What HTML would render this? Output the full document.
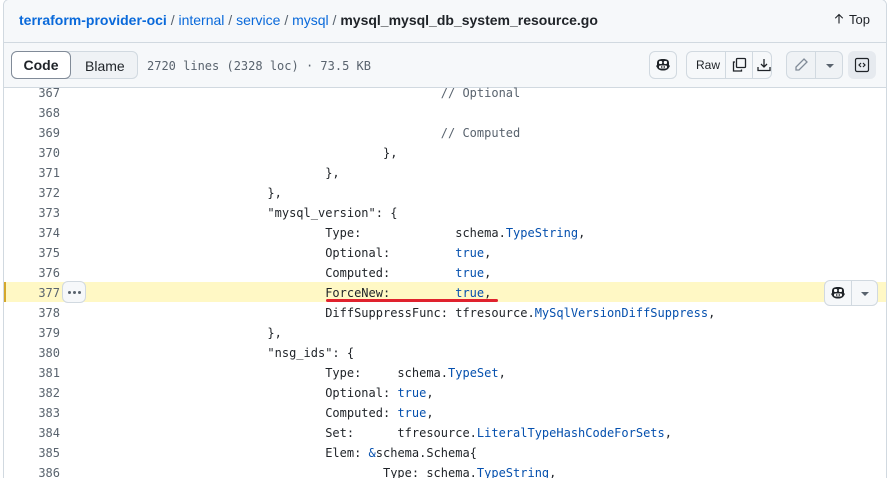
<!DOCTYPE html>
<html><head><meta charset="utf-8"><style>
*{box-sizing:border-box;margin:0;padding:0}
html,body{width:892px;height:478px;overflow:hidden}
body{background:#fff;font-family:"Liberation Sans",sans-serif;position:relative;color:#1f2328}
.frame{position:absolute;left:3px;top:-1px;width:884px;height:600px;border:1px solid #d1d9e0;border-radius:6px;overflow:hidden}
.hdr{position:absolute;left:0;top:0;width:100%;height:43px;background:#f6f8fa;border-bottom:1px solid #d1d9e0}
.crumb{position:absolute;left:15px;top:12px;font-size:14px;color:#59636e;white-space:nowrap}
.crumb a{color:#0969da;text-decoration:none}
.crumb b.r{color:#0969da}
.crumb b.f{color:#1f2328}
.top{position:absolute;right:16px;top:12px;font-size:13px;color:#1f2328}
.tb{position:absolute;left:0;top:43px;width:100%;height:45px;background:#f6f8fa;border-bottom:1px solid #d1d9e0}
.seg{position:absolute;left:7px;top:8px;height:28px;width:127px;border:1px solid #d1d9e0;border-radius:6px;background:#eff2f5;font-size:14px}
.seg .c{position:absolute;left:-1px;top:-1px;width:60px;height:28px;border:1px solid #818b98;border-radius:6px;background:#fff;font-weight:bold;text-align:center;line-height:26px}
.seg .b{position:absolute;left:73px;top:6px;color:#1f2328}
.meta{position:absolute;left:143px;top:16px;font:12px "DejaVu Sans Mono",monospace;color:#59636e}
.btn{position:absolute;top:8px;height:28px;border:1px solid #d1d9e0;border-radius:6px;background:#f6f8fa}
.code{position:absolute;left:0;top:83px;font:12px/20px "DejaVu Sans Mono","Liberation Mono",monospace;tab-size:8;-moz-tab-size:8}
.ln{position:absolute;left:0;width:56px;text-align:right;color:#59636e}
.tx{position:absolute;left:90px;white-space:pre;color:#1f2328}
.k{color:#0550ae}
.cm{color:#59636e}
.hl{position:absolute;left:0;top:199px;width:884px;height:20px;background:#fff8c5;border-left:2px solid #d4a72c}
.dots{position:absolute;left:58px;top:198px;width:24px;height:22px;border:1px solid #d1d9e0;border-radius:6px;background:#f6f8fa}
.dots i{position:absolute;top:9px;width:3px;height:3px;border-radius:50%;background:#59636e}
</style></head><body>
<div class="frame">
<div class="hdr">
<div class="crumb"><b class="r">terraform-provider-oci</b> / <a>internal</a> / <a>service</a> / <a>mysql</a> / <b class="f">mysql_mysql_db_system_resource.go</b></div>
<div class="top"><svg width="12" height="12" viewBox="0 0 16 16" style="vertical-align:-1px;margin-right:4px"><path d="M8 14V2M3 7l5-5 5 5" stroke="#1f2328" stroke-width="1.5" fill="none"/></svg>Top</div>
</div>
<div class="tb">
<div class="seg"><div class="c">Code</div><div class="b">Blame</div></div>
<div class="meta">2720 lines (2328 loc) · 73.5 KB</div>
<div class="btn" style="left:645px;width:28px;background:#f6f8fa"><svg width="16" height="16" viewBox="0 0 16 16" style="position:absolute;left:5px;top:5px"><path d="M2 6c0-3 2-4 6-4s6 1 6 4v2c1 .5 1 1.5 0 2.5-1 2-3 3-6 3s-5-1-6-3c-1-1-1-2 0-2.5z" fill="#1f2328"/><rect x="4" y="4" width="3.2" height="3" rx="1" fill="#fff"/><rect x="8.8" y="4" width="3.2" height="3" rx="1" fill="#fff"/><rect x="4" y="8.5" width="8" height="3" rx="1.2" fill="#fff"/><rect x="6.3" y="9" width="1" height="2" fill="#1f2328"/><rect x="8.7" y="9" width="1" height="2" fill="#1f2328"/></svg></div>
<div class="btn" style="left:682px;width:86px"><span style="position:absolute;left:9px;top:6px;font-size:12px">Raw</span><div style="position:absolute;left:38px;top:0;width:1px;height:26px;background:#d1d9e0"></div><div style="position:absolute;left:65px;top:0;width:1px;height:26px;background:#d1d9e0"></div>
<svg width="16" height="16" viewBox="0 0 16 16" style="position:absolute;left:44px;top:5px" fill="none" stroke="#1f2328" stroke-width="1.3"><path d="M4 5H2.5v9h8v-1.5"/><rect x="5.5" y="1.5" width="9" height="9" rx="1"/></svg>
<svg width="16" height="16" viewBox="0 0 16 16" style="position:absolute;left:69px;top:5px" fill="none" stroke="#1f2328" stroke-width="1.3"><path d="M2 10v3.5h12V10M8 2v8M5 7l3 3 3-3"/></svg></div>
<div class="btn" style="left:782px;width:57px;background:#eff2f5"><div style="position:absolute;left:28px;top:0;width:1px;height:26px;background:#d1d9e0"></div>
<svg width="16" height="16" viewBox="0 0 16 16" style="position:absolute;left:6px;top:5px" fill="none" stroke="#818b98" stroke-width="1.3"><path d="M11 2l3 3-8 8H3v-3z"/></svg>
<svg width="10" height="6" style="position:absolute;left:38px;top:11px"><path d="M1 1h8L5 5z" fill="#59636e"/></svg></div>
<div class="btn" style="left:844px;width:28px;background:#e6eaef;border-color:#e6eaef"><svg width="16" height="16" viewBox="0 0 16 16" style="position:absolute;left:5px;top:5px" fill="none" stroke="#1f2328" stroke-width="1.2"><rect x="1.5" y="1.5" width="13" height="13" rx="1.5"/><path d="M7 6L5 8l2 2M9 6l2 2-2 2"/></svg></div>
</div>
<div class="code">
<div class="hl"></div>
<div class="ln" style="top:0">367</div><div class="ln" style="top:20px">368</div><div class="ln" style="top:40px">369</div><div class="ln" style="top:60px">370</div><div class="ln" style="top:80px">371</div><div class="ln" style="top:100px">372</div><div class="ln" style="top:120px">373</div><div class="ln" style="top:140px">374</div><div class="ln" style="top:160px">375</div><div class="ln" style="top:180px">376</div><div class="ln" style="top:200px">377</div><div class="ln" style="top:220px">378</div><div class="ln" style="top:240px">379</div><div class="ln" style="top:260px">380</div><div class="ln" style="top:280px">381</div><div class="ln" style="top:300px">382</div><div class="ln" style="top:320px">383</div><div class="ln" style="top:340px">384</div><div class="ln" style="top:360px">385</div><div class="ln" style="top:380px">386</div>
<div class="tx" style="top:0"><span class="cm">						// Optional</span>

<span class="cm">						// Computed</span>
					},
				},
			},
			"mysql_version": {
				Type:             schema.<span class="k">TypeString</span>,
				Optional:         <span class="k">true</span>,
				Computed:         <span class="k">true</span>,
				ForceNew:         <span class="k">true</span>,
				DiffSuppressFunc: tfresource.<span class="k">MySqlVersionDiffSuppress</span>,
			},
			"nsg_ids": {
				Type:     schema.<span class="k">TypeSet</span>,
				Optional: <span class="k">true</span>,
				Computed: <span class="k">true</span>,
				Set:      tfresource.<span class="k">LiteralTypeHashCodeForSets</span>,
				Elem: <span class="k">&amp;</span>schema.Schema{
					Type: schema.<span class="k">TypeString</span>,</div>
<div class="dots"><i style="left:5px"></i><i style="left:10px"></i><i style="left:15px"></i></div>
<div style="position:absolute;left:322px;top:216px;width:172px;height:3px;background:#e0222e;border-radius:2px"></div>
<div style="position:absolute;left:820px;top:197px;width:54px;height:26px;border:1px solid #d1d9e0;border-radius:6px;background:#f6f8fa"><div style="position:absolute;left:26px;top:0;width:1px;height:24px;background:#d1d9e0"></div>
<svg width="16" height="16" viewBox="0 0 16 16" style="position:absolute;left:5px;top:4px"><path d="M2 6c0-3 2-4 6-4s6 1 6 4v2c1 .5 1 1.5 0 2.5-1 2-3 3-6 3s-5-1-6-3c-1-1-1-2 0-2.5z" fill="#1f2328"/><rect x="4" y="4" width="3.2" height="3" rx="1" fill="#fff"/><rect x="8.8" y="4" width="3.2" height="3" rx="1" fill="#fff"/><rect x="4" y="8.5" width="8" height="3" rx="1.2" fill="#fff"/><rect x="6.3" y="9" width="1" height="2" fill="#1f2328"/><rect x="8.7" y="9" width="1" height="2" fill="#1f2328"/></svg>
<svg width="10" height="6" style="position:absolute;left:35px;top:10px"><path d="M1 1h8L5 5z" fill="#59636e"/></svg></div>
</div>
</div>
</body></html>
